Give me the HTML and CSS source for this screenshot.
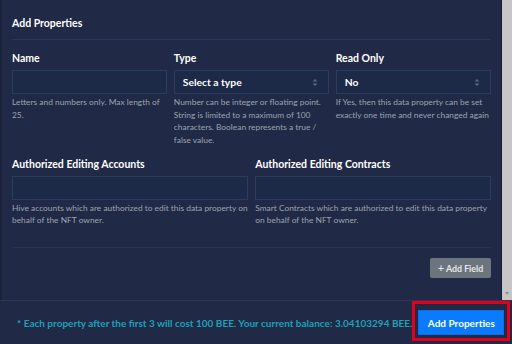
FILE: index.html
```html
<!DOCTYPE html>
<html lang="en">

<head>
    <meta charset="UTF-8" />
    <meta name="viewport" content="width=device-width, initial-scale=1.0" />
    <title>Add Properties</title>
    <link rel="stylesheet" href="styles.css">
</head>

<body>
    <div class="cuerpo">
        <div class="contenido">
            <div class="cabecera">
                <h1>Add Properties</h1>
            </div>

            <div class="fila tres">
                <div class="campo">
                    <label for="iNombre">Name</label>
                    <input type="text" id="iNombre" />
                    <p class="ayuda">Letters and numbers only. Max length of 25.</p>
                </div>
                <div class="campo">
                    <label for="sTipo">Type</label>
                    <div class="select" id="sTipo">
                        <span>Select a type</span>
                        <svg class="flechas" width="6" height="9" viewBox="0 0 6 9">
                            <path d="M0.5 3.5 L3 1 L5.5 3.5 Z M0.5 5.5 L3 8 L5.5 5.5 Z" fill="#5b6482" />
                        </svg>
                    </div>
                    <p class="ayuda">Number can be integer or floating point. String is limited to a maximum of 100 characters. Boolean represents a true / false value.</p>
                </div>
                <div class="campo">
                    <label for="sLectura">Read Only</label>
                    <div class="select" id="sLectura">
                        <span>No</span>
                        <svg class="flechas" width="6" height="9" viewBox="0 0 6 9">
                            <path d="M0.5 3.5 L3 1 L5.5 3.5 Z M0.5 5.5 L3 8 L5.5 5.5 Z" fill="#5b6482" />
                        </svg>
                    </div>
                    <p class="ayuda">If Yes, then this data property can be set exactly one time and never changed again</p>
                </div>
            </div>

            <div class="fila dos">
                <div class="campo">
                    <label for="iCuentas">Authorized Editing Accounts</label>
                    <input type="text" id="iCuentas" />
                    <p class="ayuda">Hive accounts which are authorized to edit this data property on behalf of the NFT owner.</p>
                </div>
                <div class="campo">
                    <label for="iContratos">Authorized Editing Contracts</label>
                    <input type="text" id="iContratos" />
                    <p class="ayuda">Smart Contracts which are authorized to edit this data property on behalf of the NFT owner.</p>
                </div>
            </div>

            <div class="acciones">
                <button class="bCampo"><span class="mas">+</span> Add Field</button>
            </div>
        </div>
        <div class="scroll">
            <span class="flecha-abajo"></span>
        </div>
    </div>

    <div class="pie">
        <p class="coste">* Each property after the first 3 will cost 100 BEE. Your current balance: 3.04103294 BEE.</p>
        <div class="marca">
            <button class="bAñadir">Add Properties</button>
        </div>
    </div>
</body>

</html>
```

FILE: styles.css
```css
* {
    box-sizing: border-box;
    margin: 0;
    padding: 0;
}

body {
    width: 512px;
    height: 344px;
    overflow: hidden;
    background-color: #202945;
    font-family: Lato, "Noto Sans", sans-serif;
    color: #ffffff;
}

.cuerpo {
    display: flex;
    height: 300px;
    border-left: 2px solid #1a2138;
}

.contenido {
    flex-grow: 1;
    min-width: 0;
    padding: 0 10px 0 10px;
}

.cabecera {
    padding-top: 16px;
    padding-bottom: 9px;
    border-bottom: 1px solid #2e3758;
}

h1 {
    font-size: 10.5px;
    line-height: 14px;
    font-weight: bold;
}

.fila {
    display: grid;
}

.tres {
    grid-template-columns: repeat(3, minmax(0, 1fr));
    column-gap: 6.5px;
    margin-top: 11px;
}

.dos {
    grid-template-columns: repeat(2, minmax(0, 1fr));
    column-gap: 7.5px;
    margin-top: 10px;
    padding-bottom: 20px;
    border-bottom: 1px solid #2a3352;
}

.campo label {
    display: block;
    font-size: 10.5px;
    line-height: 14px;
    font-weight: bold;
    margin-bottom: 5px;
}

.campo input,
.select {
    display: block;
    width: 100%;
    min-width: 0;
    height: 24px;
    background-color: #1c2a47;
    border: 1px solid #2b3d5e;
    color: #ffffff;
    outline: none;
}

.select {
    display: flex;
    align-items: center;
    justify-content: space-between;
    padding: 0 8px 0 8px;
    font-size: 10.3px;
    font-weight: bold;
}

.flechas {
    margin-right: 2px;
}

.ayuda {
    margin-top: 2px;
    font-size: 8.4px;
    line-height: 12.7px;
    color: #9ea3b3;
}

.dos .ayuda {
    line-height: 12.4px;
}

.acciones {
    display: flex;
    justify-content: flex-end;
    padding-top: 10px;
}

.bCampo {
    width: 61px;
    height: 20px;
    background-color: #6c757d;
    border: none;
    border-radius: 2px;
    color: #e6e7e9;
    font-family: Lato, "Noto Sans", sans-serif;
    font-size: 8.8px;
    font-weight: bold;
}

.mas {
    font-weight: normal;
    font-size: 11px;
}

.scroll {
    width: 11px;
    flex-shrink: 0;
    display: flex;
    align-items: flex-end;
    justify-content: center;
    padding-bottom: 5px;
    background-color: #c6c6c6;
    border-left: 1px solid #171c30;
}

.flecha-abajo {
    border-left: 2.5px solid transparent;
    border-right: 2.5px solid transparent;
    border-top: 3px solid #8d8d8d;
}

.pie {
    display: flex;
    align-items: center;
    justify-content: space-between;
    border-top: 1px solid #2c3553;
    padding-left: 17px;
    padding-right: 3px;
}

.coste {
    padding-top: 3px;
    font-size: 10px;
    font-weight: bold;
    color: #1ca2b9;
    white-space: nowrap;
}

.marca {
    border: 3px solid #e3001b;
    padding: 6px 3px 3px 3px;
}

.bAñadir {
    display: block;
    width: 86px;
    height: 25px;
    background-color: #0a7bff;
    border: 1px solid #0a6fe6;
    color: #ffffff;
    font-family: Lato, "Noto Sans", sans-serif;
    font-size: 10px;
    font-weight: bold;
}
```
